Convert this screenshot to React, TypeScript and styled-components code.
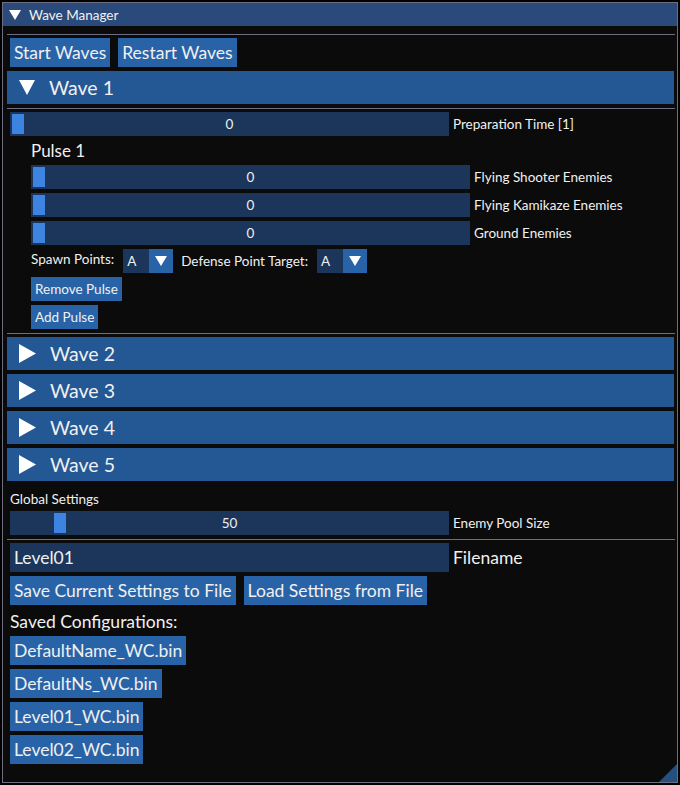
import React from "react";
import styled, { createGlobalStyle } from "styled-components";

const FONT = `"Lato", "Noto Sans", sans-serif`;

const GlobalStyle = createGlobalStyle`
    html, body {
        margin: 0;
        padding: 0;
        background: #000;
    }
    body {
        font-family: ${FONT};
        color: #f0f0f0;
    }
`;

const colors = {
    border: "#6e6e80",
    title: "#294a7a",
    button: "#2963a7",
    header: "#245894",
    frame: "#1c355a",
    grab: "#3d84e0",
    grip: "#23507f",
    bg: "#0b0b0b",
};

const BIG = 17.5;
const SMALL = 13.5;

type Dir = "down" | "right";

const Arrow: React.FC<{ dir: Dir; w: number; h: number }> = ({ dir, w, h }) => (
    <svg width={w} height={h} viewBox={`0 0 ${w} ${h}`}>
        {dir === "down" ? (
            <polygon points={`0,0 ${w},0 ${w / 2},${h}`} fill="#fff" />
        ) : (
            <polygon points={`0,0 ${w},${h / 2} 0,${h}`} fill="#fff" />
        )}
    </svg>
);

const Window = styled.div`
    position: relative;
    box-sizing: border-box;
    margin: 2px;
    width: 676px;
    height: 781px;
    border: 1px solid ${colors.border};
    background: ${colors.bg};
    overflow: hidden;
`;

const TitleBar = styled.div`
    height: 23px;
    background: ${colors.title};
    display: flex;
    align-items: center;
    gap: 8px;
    padding-left: 6px;
    font-size: ${SMALL}px;
`;

const Body = styled.div`
    display: flex;
    flex-direction: column;
    gap: 4px;
    padding: 8px 3px 0 4px;
`;

const Separator = styled.div`
    height: 1px;
    background: ${colors.border};
    margin-bottom: -1px;
    margin-right: -1px;
`;

const Row = styled.div<{ $indent?: number; $gap?: number }>`
    display: flex;
    align-items: center;
    gap: ${p => p.$gap ?? 4}px;
    padding-left: ${p => 3 + (p.$indent ?? 0)}px;
`;

const BigButton = styled.div`
    height: 29px;
    padding: 0 4px;
    background: ${colors.button};
    font-size: ${BIG}px;
    display: flex;
    align-items: center;
    white-space: nowrap;
`;

const SmallButton = styled.div`
    height: 24px;
    padding: 0 4px;
    background: ${colors.button};
    font-size: ${SMALL}px;
    display: flex;
    align-items: center;
    white-space: nowrap;
`;

const Header = styled.div`
    height: 33px;
    background: ${colors.header};
    display: flex;
    align-items: center;
    gap: 14px;
    padding-left: 12px;
    font-size: 19.5px;
`;

const SliderFrame = styled.div`
    position: relative;
    width: 439px;
    height: 24px;
    background: ${colors.frame};
    display: flex;
    align-items: center;
    justify-content: center;
    font-size: ${SMALL}px;
    flex-shrink: 0;
`;

const Grab = styled.div`
    position: absolute;
    top: 2px;
    bottom: 2px;
    width: 12px;
    background: ${colors.grab};
`;

const Label = styled.span<{ $size?: number; $lift?: number }>`
    font-size: ${p => p.$size ?? SMALL}px;
    white-space: nowrap;
    position: relative;
    top: ${p => -(p.$lift ?? 0)}px;
`;

const TextLine = styled.div<{ $h: number; $size: number; $indent?: number }>`
    height: ${p => p.$h}px;
    display: flex;
    align-items: flex-end;
    padding-left: ${p => 3 + (p.$indent ?? 0)}px;
    font-size: ${p => p.$size}px;
`;

const ComboBox = styled.div`
    display: flex;
    height: 24px;
    margin: 0 8px 0 9px;
`;

const ComboValue = styled.div`
    width: 22px;
    padding-left: 4px;
    background: ${colors.frame};
    display: flex;
    align-items: center;
    font-size: ${SMALL}px;
`;

const ComboArrow = styled.div`
    width: 24px;
    background: ${colors.button};
    display: flex;
    align-items: center;
    justify-content: center;
`;

const InputField = styled.div`
    width: 435px;
    height: 29px;
    padding-left: 4px;
    background: ${colors.frame};
    display: flex;
    align-items: center;
    font-size: ${BIG}px;
`;

const FileList = styled.div`
    display: flex;
    flex-direction: column;
    align-items: flex-start;
    gap: 4px;
    padding-left: 3px;
`;

const ResizeGrip = styled.div`
    position: absolute;
    right: 0;
    bottom: 0;
    width: 18px;
    height: 18px;
    background: ${colors.grip};
    clip-path: polygon(100% 0, 100% 100%, 0 100%);
`;

const Slider: React.FC<{ value: number; max: number }> = ({ value, max }) => (
    <SliderFrame>
        <Grab style={{ left: 2 + (value / max) * 423 }} />
        {value}
    </SliderFrame>
);

const Combo: React.FC<{ value: string }> = ({ value }) => (
    <ComboBox>
        <ComboValue>{value}</ComboValue>
        <ComboArrow>
            <Arrow dir="down" w={12} h={10} />
        </ComboArrow>
    </ComboBox>
);

const waves = ["Wave 2", "Wave 3", "Wave 4", "Wave 5"];
const enemyTypes = ["Flying Shooter Enemies", "Flying Kamikaze Enemies", "Ground Enemies"];
const savedFiles = ["DefaultName_WC.bin", "DefaultNs_WC.bin", "Level01_WC.bin", "Level02_WC.bin"];

export default function App() {
    return (
        <>
            <GlobalStyle />
            <Window>
                <TitleBar>
                    <Arrow dir="down" w={12} h={10} />
                    <span>Wave Manager</span>
                </TitleBar>
                <Body>
                    <Separator />
                    <Row $gap={8}>
                        <BigButton>Start Waves</BigButton>
                        <BigButton>Restart Waves</BigButton>
                    </Row>
                    <Header>
                        <Arrow dir="down" w={16} h={15} />
                        <span>Wave 1</span>
                    </Header>
                    <Separator />
                    <Row>
                        <Slider value={0} max={10} />
                        <Label>Preparation Time [1]</Label>
                    </Row>
                    <TextLine $h={21} $size={17} $indent={21}>
                        Pulse 1
                    </TextLine>
                    {enemyTypes.map(name => (
                        <Row key={name} $indent={21}>
                            <Slider value={0} max={10} />
                            <Label>{name}</Label>
                        </Row>
                    ))}
                    <Row $indent={21} $gap={0}>
                        <Label $lift={2}>Spawn Points:</Label>
                        <Combo value="A" />
                        <Label>Defense Point Target:</Label>
                        <Combo value="A" />
                    </Row>
                    <Row $indent={21}>
                        <SmallButton>Remove Pulse</SmallButton>
                    </Row>
                    <Row $indent={21}>
                        <SmallButton>Add Pulse</SmallButton>
                    </Row>
                    <Separator />
                    {waves.map(w => (
                        <Header key={w}>
                            <Arrow dir="right" w={17} h={19} />
                            <span>{w}</span>
                        </Header>
                    ))}
                    <TextLine $h={22} $size={SMALL}>
                        Global Settings
                    </TextLine>
                    <Row>
                        <Slider value={50} max={500} />
                        <Label>Enemy Pool Size</Label>
                    </Row>
                    <Separator />
                    <Row>
                        <InputField>Level01</InputField>
                        <Label $size={BIG}>Filename</Label>
                    </Row>
                    <Row $gap={8}>
                        <BigButton>Save Current Settings to File</BigButton>
                        <BigButton>Load Settings from File</BigButton>
                    </Row>
                    <TextLine $h={23} $size={BIG}>
                        Saved Configurations:
                    </TextLine>
                    <FileList>
                        {savedFiles.map(f => (
                            <BigButton key={f}>{f}</BigButton>
                        ))}
                    </FileList>
                </Body>
                <ResizeGrip />
            </Window>
        </>
    );
}
